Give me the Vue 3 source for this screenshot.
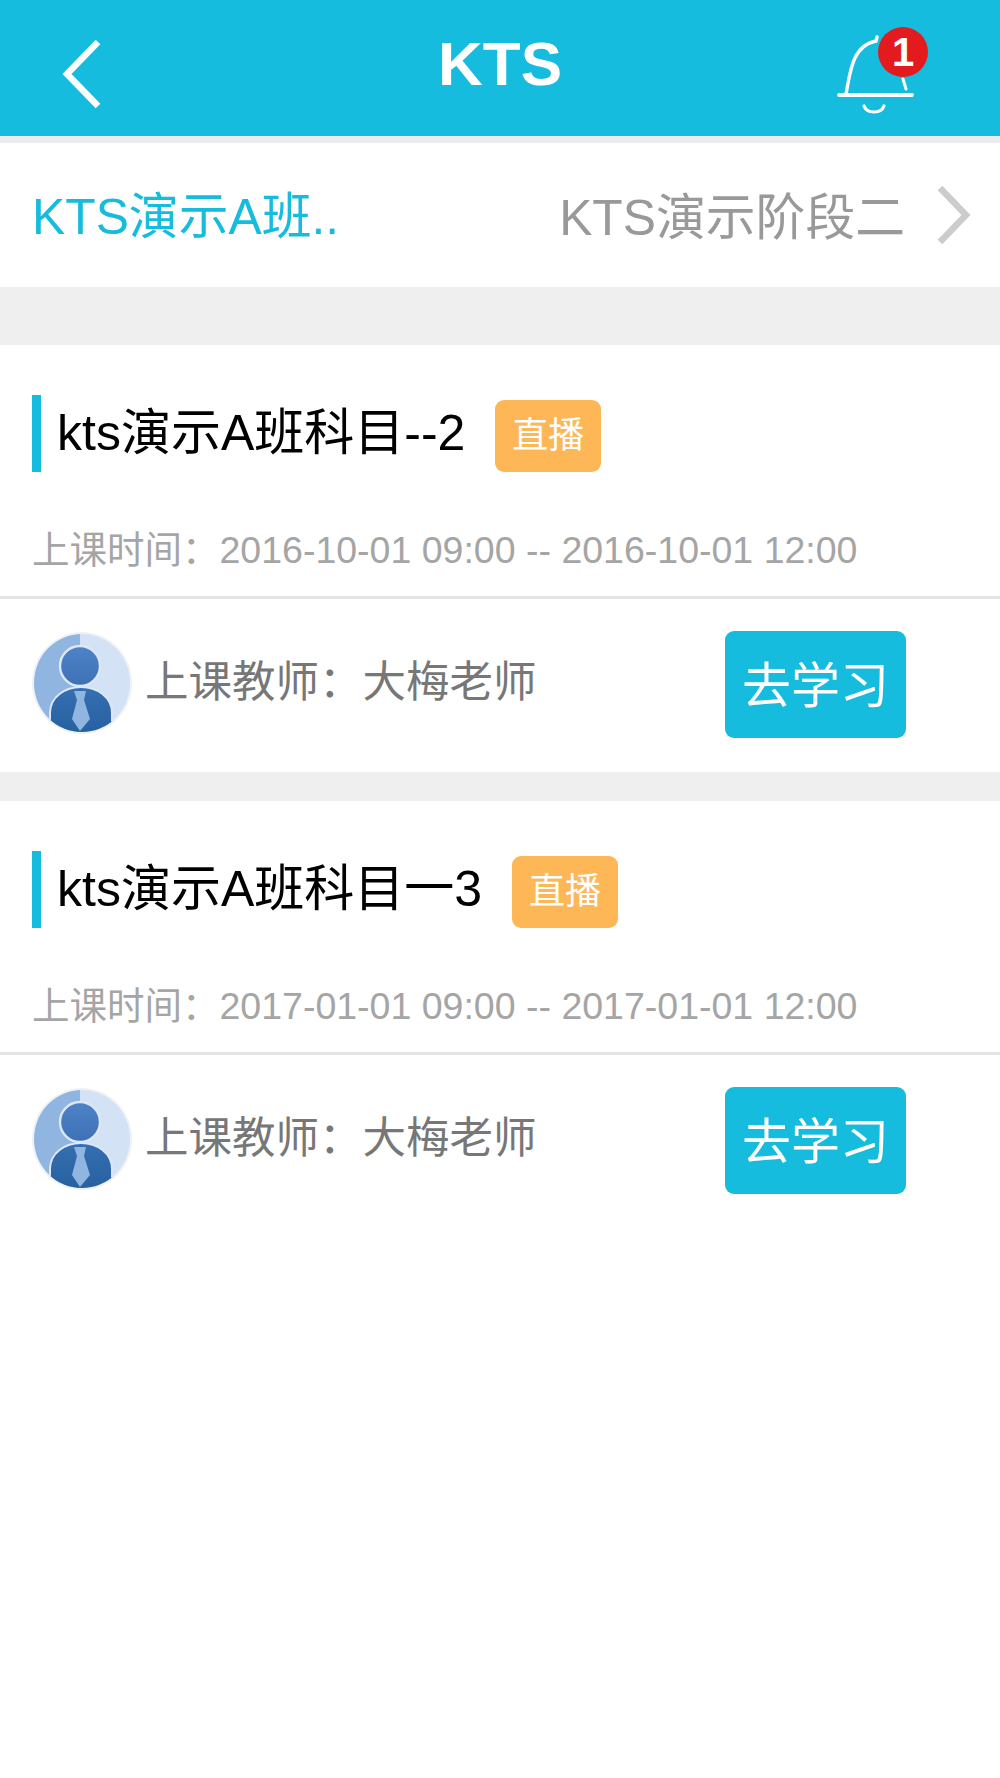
<script setup>
const courses = [
  { id: 1, name: 'kts演示A班科目--2', time: '2016-10-01 09:00 -- 2016-10-01 12:00' },
  { id: 2, name: 'kts演示A班科目一3', time: '2017-01-01 09:00 -- 2017-01-01 12:00' }
]
</script>

<template>
  <div class="page">
    <header class="topbar">
      <svg class="back" width="44" height="72" viewBox="0 0 44 72" fill="none">
        <path d="M38 4 L7 36 L38 68" stroke="#fff" stroke-width="6.5" />
      </svg>
      <h1 class="brand">KTS</h1>
      <div class="bell">
        <svg width="80" height="80" viewBox="0 0 80 80" fill="none" stroke="#fff" stroke-linecap="round">
          <path d="M2 60 H75" stroke-width="3.8" />
          <path d="M9 59 C13 40 14 11 39 6 L40 2" stroke-width="3.4" />
          <path d="M66 44 L69 54" stroke-width="3" />
          <path d="M27 71 C30 79 44 79 47 71" stroke-width="3.2" />
        </svg>
        <span class="badge">1</span>
      </div>
    </header>

    <div class="stage">
      <span class="class-name">KTS演示A班..</span>
      <span class="stage-right">
        <span class="stage-name">KTS演示阶段二</span>
        <svg width="36" height="60" viewBox="0 0 36 60" fill="none">
          <path d="M4 3 L30 30 L4 57" stroke="#ccc" stroke-width="6.5" />
        </svg>
      </span>
    </div>

    <section v-for="c in courses" :key="c.id" class="card">
      <div class="title-row">
        <div class="title">{{ c.name }}</div>
        <span class="live">直播</span>
      </div>
      <div class="time">上课时间&#xFF1A;{{ c.time }}</div>
      <div class="teacher-row">
        <svg class="avatar" width="100" height="104" viewBox="0 0 100 104">
          <defs>
            <linearGradient :id="'head' + c.id" x1="0" y1="0" x2="0" y2="1">
              <stop offset="0" stop-color="#4f83c8" />
              <stop offset="1" stop-color="#3d70b4" />
            </linearGradient>
            <linearGradient :id="'body' + c.id" x1="0" y1="0" x2="0" y2="1">
              <stop offset="0" stop-color="#366fb2" />
              <stop offset="1" stop-color="#25609f" />
            </linearGradient>
            <clipPath :id="'clip' + c.id">
              <ellipse cx="50" cy="52" rx="48" ry="49" />
            </clipPath>
          </defs>
          <ellipse cx="50" cy="52" rx="50" ry="51" fill="#eef1f5" />
          <g :clip-path="'url(#clip' + c.id + ')'">
            <rect x="0" y="0" width="48" height="104" fill="#8fb5e0" />
            <rect x="48" y="0" width="52" height="104" fill="#d3e2f4" />
            <path d="M18 104 V82 C18 66 33 56 49 56 C65 56 80 66 80 82 V104 Z" :fill="'url(#body' + c.id + ')'" stroke="#dce8f6" stroke-width="2" />
          </g>
          <circle cx="48" cy="35" r="20" :fill="'url(#head' + c.id + ')'" stroke="#dce8f6" stroke-width="2.4" />
          <path d="M42 60 H54 L52 69 L58 88 L48 100 L40 88 L45 69 Z" fill="#8fb5e0" />
        </svg>
        <span class="teacher">上课教师&#xFF1A;大梅老师</span>
        <button class="study">去学习</button>
      </div>
    </section>
  </div>
</template>

<style>
html, body { margin: 0; background: #fff; }
</style>

<style scoped>
.page {
  width: 1000px;
  min-height: 1778px;
  background: #fff;
  font-family: "Liberation Sans", "Noto Sans CJK SC", sans-serif;
}
.topbar {
  height: 136px;
  background: #16bcde;
  display: grid;
  grid-template-columns: 1fr auto 1fr;
  align-items: center;
  border-bottom: 7px solid #ececec;
}
.back { margin-left: 60px; margin-top: 12px; }
.brand {
  margin: 0 0 8px;
  color: #fff;
  font-size: 62px;
  font-weight: 700;
  line-height: 1;
}
.bell {
  position: relative;
  justify-self: end;
  width: 80px;
  height: 80px;
  margin: 14px 83px 0 0;
}
.badge {
  position: absolute;
  top: -8px;
  left: 41px;
  width: 50px;
  height: 50px;
  border-radius: 50%;
  background: #e31b1f;
  color: #fff;
  font-size: 40px;
  font-weight: 700;
  line-height: 50px;
  text-align: center;
}
.stage {
  height: 144px;
  padding: 0 28px 0 32px;
  display: flex;
  align-items: center;
  justify-content: space-between;
  font-size: 49.8px;
  border-bottom: 58px solid #efefef;
}
.class-name { color: #16bcde; margin-top: -6px; }
.stage-right { display: flex; align-items: center; gap: 31px; }
.stage-name { color: #999; margin-top: -4px; }
.card {
  box-sizing: border-box;
  height: 456px;
  padding-top: 50px;
  border-bottom: 29px solid #efefef;
  background: #fff;
}
.card:last-child { border-bottom: 0; }
.title-row {
  display: flex;
  align-items: flex-end;
  margin-left: 32px;
  height: 77px;
}
.title {
  height: 77px;
  line-height: 76px;
  border-left: 9px solid #16bcde;
  padding-left: 16px;
  font-size: 50px;
  color: #000;
}
.live {
  margin-left: 30px;
  width: 106px;
  height: 72px;
  border-radius: 9px;
  background: #fdb756;
  color: #fff;
  font-size: 36px;
  line-height: 72px;
  text-align: center;
}
.time {
  margin: 52px 0 0 32px;
  height: 52px;
  line-height: 52px;
  font-size: 37.5px;
  color: #a5a5a5;
}
.teacher-row {
  margin-top: 20px;
  border-top: 3px solid #e5e5e5;
  padding: 32px 94px 0 32px;
  display: flex;
  align-items: flex-start;
}
.avatar { flex: none; }
.teacher {
  margin-left: 13px;
  flex: 1;
  font-size: 43.5px;
  line-height: 102px;
  color: #777;
}
.study {
  width: 181px;
  height: 107px;
  border: 0;
  border-radius: 9px;
  padding: 0 0 6px;
  background: #16bcde;
  color: #fff;
  font-family: inherit;
  font-size: 49px;
}
</style>
